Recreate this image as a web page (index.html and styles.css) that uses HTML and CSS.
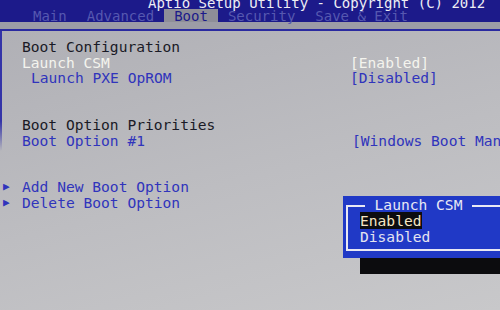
FILE: index.html
```html
<!DOCTYPE html>
<html>

<head>
  <title>Aptio Setup Utility</title>
  <link rel="stylesheet" href="styles.css">
</head>

<body>
  <div class="screen">
    <div class="header">
      <div class="title">Aptio Setup Utility - Copyright (C) 2012</div>
      <div class="tabs">
        <span class="tab">Main</span>
        <span class="tab">Advanced</span>
        <span class="tab active">Boot</span>
        <span class="tab">Security</span>
        <span class="tab">Save &amp; Exit</span>
      </div>
    </div>
    <div class="band"></div>

    <div class="frame">
      <div class="row"><span></span><span class="label">Boot Configuration</span><span></span></div>
      <div class="row"><span></span><span class="label selected">Launch CSM</span><span class="value selected">[Enabled]</span></div>
      <div class="row"><span></span><span class="label link sub">Launch PXE OpROM</span><span class="value link">[Disabled]</span></div>
      <div class="row"></div>
      <div class="row"></div>
      <div class="row"><span></span><span class="label">Boot Option Priorities</span><span></span></div>
      <div class="row"><span></span><span class="label link">Boot Option #1</span><span class="value link wide">[Windows Boot Manager]</span></div>
      <div class="row"></div>
      <div class="row"></div>
      <div class="row"><span class="arrow">&#9654;</span><span class="label link">Add New Boot Option</span><span></span></div>
      <div class="row"><span class="arrow">&#9654;</span><span class="label link">Delete Boot Option</span><span></span></div>
    </div>

    <div class="popup">
      <div class="popup-box">
        <div class="popup-title"><span>Launch CSM</span></div>
        <div class="option picked"><span>Enabled</span></div>
        <div class="option"><span>Disabled</span></div>
      </div>
    </div>
    <div class="popup-shadow"></div>
  </div>
</body>

</html>
```

FILE: styles.css
```css
* {
  margin: 0;
  padding: 0;
  box-sizing: border-box;
}

body {
  width: 500px;
  height: 310px;
  overflow: hidden;
  font-family: 'DejaVu Sans Mono', 'Liberation Mono', monospace;
  background-color: #bcbcc0;
}

.screen {
  position: relative;
  width: 500px;
  height: 310px;
  overflow: hidden;
  background: linear-gradient(165deg, #aeaeb4 0%, #bdbdc1 55%, #c8c8ca 100%);
}

.header {
  height: 22px;
  background-color: #1c1a8a;
}

.title {
  height: 9px;
  line-height: 6px;
  padding-left: 148px;
  font-size: 14px;
  color: #eeeef4;
  white-space: nowrap;
}

.tabs {
  display: flex;
  align-items: flex-end;
  padding-left: 23px;
  height: 13px;
}

.tab {
  height: 13px;
  padding: 0 10px;
  font-size: 14px;
  line-height: 14px;
  color: #5658b0;
  white-space: nowrap;
}

.tab.active {
  background-color: #8e8e98;
  color: #1c1a8a;
}

.band {
  height: 7px;
  background-color: #9c9ca6;
}

.frame {
  height: 288px;
  border-top: 2px solid #2a2aa0;
  padding: 8px 0 0 2px;
  background: linear-gradient(to bottom, #3434a8 0, #3434a8 90px, rgba(52, 52, 168, 0) 120px) no-repeat left top / 2px 100%;
}

.row {
  display: grid;
  grid-template-columns: 20px 328px 1fr;
  height: 15.6px;
  line-height: 15.6px;
  font-size: 14.6px;
  white-space: nowrap;
}

.label {
  color: #1a1a26;
}

.label.sub {
  padding-left: 9px;
}

.selected {
  color: #f4f4ee;
}

.link {
  color: #3034bc;
}

.value.wide {
  padding-left: 2px;
}

.arrow {
  color: #3034bc;
  font-size: 11px;
  padding-left: 1px;
}

.popup {
  position: absolute;
  left: 343px;
  top: 196px;
  width: 170px;
  height: 62px;
  background-color: #2039c6;
  padding: 9px 0 7px 3px;
}

.popup-box {
  height: 100%;
  border: 2px solid #e8e8f4;
  border-right: none;
  font-size: 14.6px;
}

.popup-title {
  height: 0;
  text-align: center;
  padding-right: 24px;
  line-height: 0;
}

.popup-title span {
  display: inline-block;
  padding: 0 10px;
  background-color: #2039c6;
  color: #e8e8f4;
  line-height: 14px;
  transform: translateY(-9px);
}

.option {
  height: 16px;
  line-height: 16px;
  padding-left: 12px;
  color: #e4e4f0;
}

.popup-title + .option {
  margin-top: 6px;
}

.option.picked span {
  background-color: #0c0c10;
  color: #f6e6c4;
}

.popup-shadow {
  position: absolute;
  left: 360px;
  top: 258px;
  width: 160px;
  height: 16px;
  background-color: #0c0c0e;
}
```
